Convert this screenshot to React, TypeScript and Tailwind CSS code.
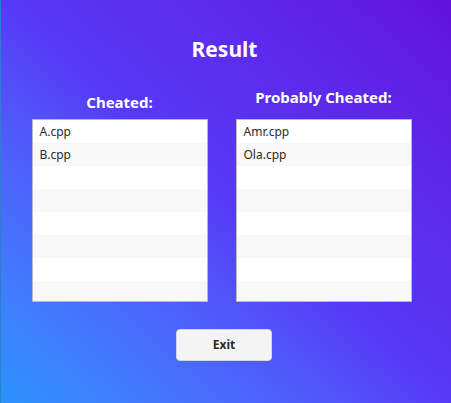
const cheated = ["A.cpp", "B.cpp"];
const probably = ["Amr.cpp", "Ola.cpp"];

const FileList = ({ items }: { items: string[] }) => {
  const rows = Array.from({ length: 8 }, (_, i) => items[i] ?? "");
  return (
    <div className="h-[183px] w-[176px] overflow-hidden border border-[#b9b9cc] bg-white">
      {rows.map((name, i) => (
        <div
          key={i}
          className={`flex h-[23px] shrink-0 items-center px-[7px] text-[12px] text-[#2b2b2b] ${
            i % 2 === 1 ? "bg-[#f8f8f8]" : "bg-white"
          }`}
        >
          {name}
        </div>
      ))}
    </div>
  );
};

export default function App() {
  return (
    <div
      className="flex h-[403px] w-[451px] flex-col items-center border-l border-[#2a7fcf] bg-linear-to-tr from-[#2a93ff] via-[#5639f7] to-[#6210dd]"
      style={{ fontFamily: '"Noto Sans", "Open Sans", sans-serif' }}
    >
      <h1 className="mt-[34px] mr-[3px] text-[21px] leading-[30px] font-bold text-white">Result</h1>
      <div className="mt-[23px] mr-[9px] flex items-end gap-[28px]">
        <div className="flex flex-col items-center">
          <div className="mb-[7px] text-[15px] leading-[20px] font-bold text-white">Cheated:</div>
          <FileList items={cheated} />
        </div>
        <div className="flex flex-col items-center">
          <div className="mb-[12px] text-[15px] leading-[20px] font-bold text-white">Probably Cheated:</div>
          <FileList items={probably} />
        </div>
      </div>
      <button className="mt-[27px] mr-[4px] h-[32px] w-[96px] rounded-[4px] border border-[#d4d4ec] bg-[#f4f4f4] text-[12px] font-bold text-[#2b2b2b]">
        Exit
      </button>
    </div>
  );
}
